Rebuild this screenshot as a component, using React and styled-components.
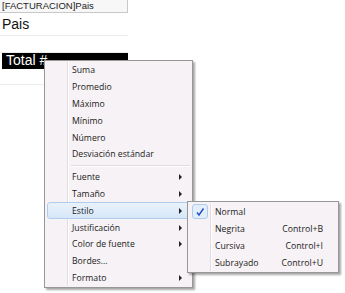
import React from "react";
import styled, { createGlobalStyle } from "styled-components";

const Global = createGlobalStyle`
  html, body { margin: 0; padding: 0; background: #fff; }
  body { width: 345px; height: 293px; overflow: hidden; position: relative; }
`;

const Page = styled.div`
  position: relative;
  width: 345px;
  height: 293px;
  font-family: "Liberation Sans", Arial, sans-serif;
`;

const Grid = styled.div`
  width: 128px;
  display: flex;
  flex-direction: column;
`;

const HeaderCell = styled.div`
  height: 12px;
  line-height: 12px;
  font-size: 9.5px;
  color: #222;
  padding-left: 2px;
  background: #f7f7f7;
  border-bottom: 1px solid #c8c8c8;
  border-right: 1px solid #c8c8c8;
  white-space: nowrap;
`;

const Row = styled.div`
  height: ${(p) => p.$h}px;
  line-height: ${(p) => p.$h}px;
  font-size: 14px;
  padding-left: ${(p) => (p.$dark ? 4 : 2)}px;
  margin-left: ${(p) => (p.$dark ? 2 : 0)}px;
  background: ${(p) => (p.$dark ? "#000" : "#fff")};
  color: ${(p) => (p.$dark ? "#fff" : "#111")};
  border-bottom: 1px solid ${(p) => (p.$dark ? "#000" : "#ececec")};
  white-space: nowrap;
`;

const Menu = styled.div`
  position: absolute;
  left: ${(p) => p.$x}px;
  top: ${(p) => p.$y}px;
  width: ${(p) => p.$w}px;
  box-sizing: border-box;
  padding: 1px 2px;
  background: #f6f2f5;
  border: 1px solid #979797;
  box-shadow: 2px 2px 2px rgba(0, 0, 0, 0.35);
  font-family: "Open Sans", "Noto Sans", sans-serif;
  font-size: 8.7px;
  color: #1b1b1b;
  &::before {
    content: "";
    position: absolute;
    top: 1px;
    bottom: 1px;
    left: ${(p) => p.$gutter}px;
    width: 1px;
    background: #e0dce0;
    box-shadow: 1px 0 0 #ffffff;
  }
`;

const Item = styled.div`
  position: relative;
  height: ${(p) => p.$h || 16.8}px;
  display: flex;
  align-items: center;
  box-sizing: border-box;
  padding-left: ${(p) => p.$pl}px;
  padding-right: 8px;
  border: 1px solid ${(p) => (p.$active ? "#aeccef" : "transparent")};
  border-radius: 3px;
  background: ${(p) =>
    p.$active ? "linear-gradient(#eaf2fb, #d6e6f8)" : "transparent"};
  white-space: nowrap;
`;

const Label = styled.span`
  flex: 1;
`;

const Shortcut = styled.span`
  padding-right: 4px;
`;

const Arrow = styled.span`
  width: 0;
  height: 0;
  border-top: 3px solid transparent;
  border-bottom: 3px solid transparent;
  border-left: 3px solid #222;
  margin-right: -1px;
`;

const Separator = styled.div`
  height: 6px;
  display: flex;
  align-items: center;
  padding-left: 24px;
  &::after {
    content: "";
    flex: 1;
    height: 1px;
    background: #e0dce0;
    box-shadow: 0 1px 0 #fff;
  }
`;

const Check = styled.span`
  position: absolute;
  left: 1px;
  top: 0px;
  width: 16px;
  height: 15px;
  box-sizing: border-box;
  border: 1px solid #aeccef;
  border-radius: 3px;
  background: #e4eefa;
  display: flex;
  align-items: center;
  justify-content: center;
`;

const mainItems = [
  ["Suma"],
  ["Promedio"],
  ["Máximo"],
  ["Mínimo"],
  ["Número"],
  ["Desviación estándar"],
  "sep",
  ["Fuente", true],
  ["Tamaño", true],
  ["Estilo", true, true],
  ["Justificación", true],
  ["Color de fuente", true],
  ["Bordes..."],
  ["Formato", true],
];

const subItems = [
  ["Normal", "", true],
  ["Negrita", "Control+B"],
  ["Cursiva", "Control+I"],
  ["Subrayado", "Control+U"],
];

export default function App() {
  return (
    <Page>
      <Global />
      <Grid>
        <HeaderCell>[FACTURACION]Pais</HeaderCell>
        <Row $h={22}>Pais</Row>
        <Row $h={16}></Row>
        <Row $h={15} $dark>Total #</Row>
        <Row $h={15}></Row>
      </Grid>

      <Menu $x={44} $y={60} $w={149} $gutter={22}>
        {mainItems.map((it, i) =>
          it === "sep" ? (
            <Separator key={i} />
          ) : (
            <Item key={i} $pl={24} $active={it[2]}>
              <Label>{it[0]}</Label>
              {it[1] && <Arrow />}
            </Item>
          )
        )}
      </Menu>

      <Menu $x={187} $y={201} $w={152} $gutter={22}>
        {subItems.map((it, i) => (
          <Item key={i} $h={17} $pl={24}>
            {it[2] && (
              <Check>
                <svg width="10" height="10" viewBox="0 0 10 10">
                  <path
                    d="M2 5.5 L4 8 L8.5 1.5"
                    fill="none"
                    stroke="#1f4fbf"
                    strokeWidth="1.4"
                  />
                </svg>
              </Check>
            )}
            <Label>{it[0]}</Label>
            <Shortcut>{it[1]}</Shortcut>
          </Item>
        ))}
      </Menu>
    </Page>
  );
}
